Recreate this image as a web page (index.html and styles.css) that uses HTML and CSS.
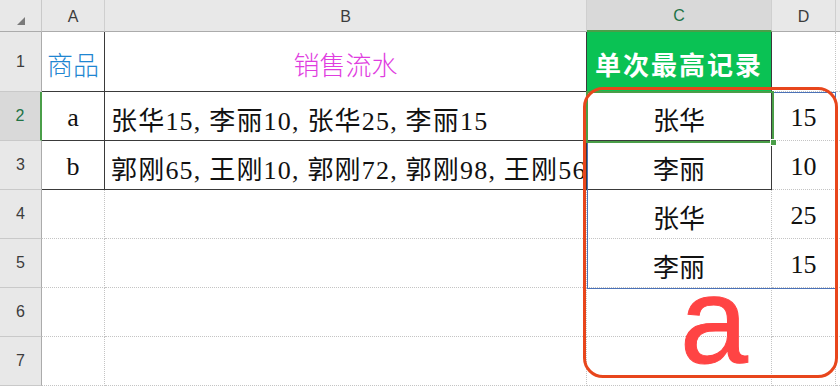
FILE: index.html
```html
<!DOCTYPE html>
<html lang="zh">
<head>
<meta charset="utf-8">
<title>Sheet</title>
<link rel="stylesheet" href="styles.css">
</head>
<body>
<div class="wrap">
  <div class="sheet">
    <div class="corner"><svg width="42" height="32" viewBox="0 0 42 32"><polygon points="25,17 25,25 17,25" fill="#7a7a7a"/></svg></div>
    <div class="ch">A</div>
    <div class="ch">B</div>
    <div class="ch ch-sel">C</div>
    <div class="ch">D</div>
    <div class="ch ch-end"></div>

    <div class="rh">1</div>
    <div class="c bd t-blue">商品</div>
    <div class="c bd t-mag">销售流水</div>
    <div class="c bd green">单次最高记录</div>
    <div class="c"></div>
    <div class="c end"></div>

    <div class="rh rh-sel">2</div>
    <div class="c bd">a</div>
    <div class="c bd left">张华15, 李丽10, 张华25, 李丽15</div>
    <div class="c bd">张华</div>
    <div class="c">15</div>
    <div class="c end"></div>

    <div class="rh">3</div>
    <div class="c bd">b</div>
    <div class="c bd left">郭刚65, 王刚10, 郭刚72, 郭刚98, 王刚56</div>
    <div class="c bd">李丽</div>
    <div class="c">10</div>
    <div class="c end"></div>

    <div class="rh">4</div>
    <div class="c"></div>
    <div class="c"></div>
    <div class="c">张华</div>
    <div class="c">25</div>
    <div class="c end"></div>

    <div class="rh">5</div>
    <div class="c"></div>
    <div class="c"></div>
    <div class="c">李丽</div>
    <div class="c">15</div>
    <div class="c end"></div>

    <div class="rh">6</div>
    <div class="c"></div>
    <div class="c"></div>
    <div class="c"></div>
    <div class="c"></div>
    <div class="c end"></div>

    <div class="rh">7</div>
    <div class="c"></div>
    <div class="c"></div>
    <div class="c"></div>
    <div class="c"></div>
    <div class="c end"></div>
  </div>

  <div class="range"></div>
  <div class="selection"><span class="handle"></span></div>
  <div class="mark"></div>
  <div class="big-a">a</div>
</div>
</body>
</html>
```

FILE: styles.css
```css
* { box-sizing: border-box; }
html, body { margin: 0; padding: 0; background: #fff; }
body { width: 840px; height: 386px; overflow: hidden; }

.wrap { position: relative; width: 840px; height: 386px; }

.sheet {
  display: grid;
  grid-template-columns: 42px 63px 482px 185px 64px 4px;
  grid-template-rows: 32px 60px 49px 49px 49px 49px 49px 49px;
  font-family: "Liberation Serif", "Noto Sans CJK SC", serif;
  font-size: 26px;
  color: #111;
}

.corner {
  background: #e8e8e8;
  border-right: 1px solid #c9c9c9;
  border-bottom: 1px solid #ababab;
}
.corner svg { display: block; }

.ch {
  background: #e8e8e8;
  border-right: 1px solid #cfcfcf;
  border-bottom: 1px solid #ababab;
  font-family: "Liberation Sans", Arial, sans-serif;
  font-size: 16px;
  color: #3c3c3c;
  display: flex;
  align-items: center;
  justify-content: center;
  padding-top: 2px;
}
.ch-sel {
  background: #d9d9d9;
  color: #217346;
  border-bottom: 2px solid #4a9e48;
}
.ch-end { border-right: none; }

.rh {
  background: #e8e8e8;
  border-right: 1px solid #ababab;
  border-bottom: 1px solid #c9c9c9;
  font-family: "Liberation Sans", Arial, sans-serif;
  font-size: 16px;
  color: #3c3c3c;
  display: flex;
  align-items: center;
  justify-content: center;
}
.rh-sel {
  background: #d9d9d9;
  color: #217346;
  border-right: 2px solid #4a9e48;
}

.c {
  border-right: 1px dotted #c4c4c4;
  border-bottom: 1px dotted #c4c4c4;
  display: flex;
  align-items: center;
  justify-content: center;
  white-space: nowrap;
  overflow: hidden;
  padding-top: 4px;
}
.c.end { border-right: none; }
.c.bd {
  border-right: 1px solid #3a3a3a;
  border-bottom: 1px solid #3a3a3a;
}
.c.left { justify-content: flex-start; padding-left: 6px; letter-spacing: 1.2px; }

.t-blue { color: #1f86d1; font-family: "Noto Sans CJK SC", sans-serif; font-weight: 300; }
.t-mag { color: #df3ddf; font-family: "Noto Sans CJK SC", sans-serif; font-weight: 300; }
.green {
  background: #0ac254;
  color: #fff;
  font-weight: bold;
  font-size: 26px;
  letter-spacing: 2px;
}

.range {
  position: absolute;
  left: 587px;
  top: 92px;
  width: 249px;
  height: 197px;
  border: 1px solid #4b72b8;
}

.selection {
  position: absolute;
  left: 586px;
  top: 91px;
  width: 188px;
  height: 52px;
  border: 2px solid #4a9e48;
}
.handle {
  position: absolute;
  right: -5px;
  bottom: -5px;
  width: 7px;
  height: 7px;
  background: #4a9e48;
  border: 1px solid #fff;
}

.mark {
  position: absolute;
  left: 583px;
  top: 87px;
  width: 255px;
  height: 291px;
  border: 3px solid #e8461c;
  border-radius: 20px;
}

.big-a {
  position: absolute;
  left: 655px;
  top: 281px;
  width: 118px;
  height: 84px;
  text-align: center;
  font-family: "Liberation Sans", Arial, sans-serif;
  font-size: 122px;
  line-height: 80px;
  color: #ff4444;
  -webkit-text-stroke: 1px #ff4444;
}
```
